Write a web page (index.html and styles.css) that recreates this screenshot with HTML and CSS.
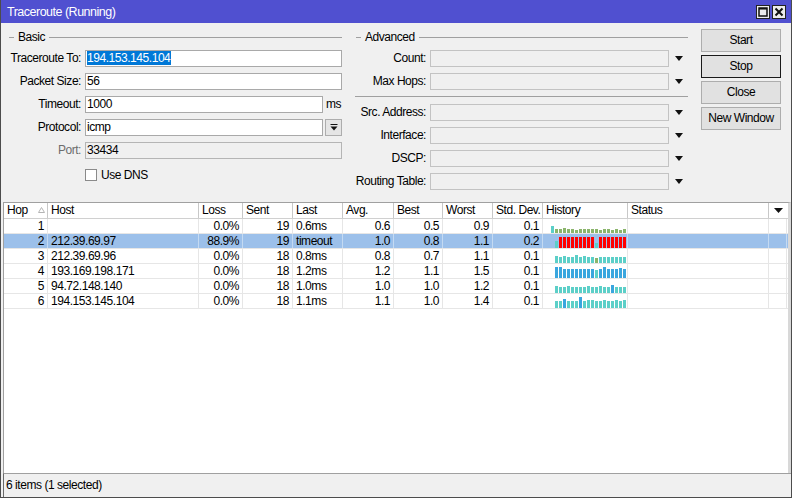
FILE: index.html
```html
<!DOCTYPE html>
<html>
<head>
<meta charset="utf-8">
<link rel="stylesheet" href="styles.css">
</head>
<body>
<div class="window">
  <div class="titlebar">
    <span class="title">Traceroute (Running)</span>
    <div class="tb-buttons">
      <span class="tb-btn"><svg width="10" height="10" viewBox="0 0 10 10"><rect x="1" y="1" width="8" height="8" fill="none" stroke="#111" stroke-width="1.5"/><line x1="1" y1="1.8" x2="9" y2="1.8" stroke="#111" stroke-width="1.5"/></svg></span>
      <span class="tb-btn"><svg width="10" height="10" viewBox="0 0 10 10"><path d="M1.5 1.5 L8.5 8.5 M8.5 1.5 L1.5 8.5" stroke="#111" stroke-width="2"/></svg></span>
    </div>
  </div>

  <div class="top">
    <section class="group basic">
      <div class="legend"><span>Basic</span></div>
      <div class="form">
        <div class="lbl">Traceroute To:</div>
        <div class="box"><span class="sel">194.153.145.104</span></div>
        <div class="lbl">Packet Size:</div>
        <div class="box">56</div>
        <div class="lbl">Timeout:</div>
        <div class="field"><div class="box grow">1000</div><span class="unit">ms</span></div>
        <div class="lbl">Protocol:</div>
        <div class="field"><div class="box grow">icmp</div><span class="dd-btn"><svg width="8" height="7" viewBox="0 0 8 7"><rect x="0.5" y="0" width="7" height="1" fill="#111"/><path d="M0.5 2.5 H7.5 L4 6.5 Z" fill="#111"/></svg></span></div>
        <div class="lbl dis">Port:</div>
        <div class="box disabled">33434</div>
        <div class="lbl"></div>
        <div class="check"><span class="cb"></span><span>Use DNS</span></div>
      </div>
    </section>

    <section class="group advanced">
      <div class="legend"><span>Advanced</span></div>
      <div class="form adv">
        <div class="lbl">Count:</div>
        <div class="field"><div class="box grow empty"></div><span class="arrow"></span></div>
        <div class="lbl">Max Hops:</div>
        <div class="field"><div class="box grow empty"></div><span class="arrow"></span></div>
        <div class="sep"></div>
        <div class="lbl">Src. Address:</div>
        <div class="field"><div class="box grow empty"></div><span class="arrow"></span></div>
        <div class="lbl">Interface:</div>
        <div class="field"><div class="box grow empty"></div><span class="arrow"></span></div>
        <div class="lbl">DSCP:</div>
        <div class="field"><div class="box grow empty"></div><span class="arrow"></span></div>
        <div class="lbl">Routing Table:</div>
        <div class="field"><div class="box grow empty"></div><span class="arrow"></span></div>
      </div>
    </section>

    <div class="buttons">
      <div class="btn">Start</div>
      <div class="btn default">Stop</div>
      <div class="btn">Close</div>
      <div class="btn">New Window</div>
    </div>
  </div>

  <div class="list">
    <div class="row head">
      <div class="c">Hop<svg class="sort" width="7" height="6" viewBox="0 0 7 6"><path d="M3.5 0.5 L6.5 5.5 H0.5 Z" fill="none" stroke="#b4b4b4" stroke-width="1"/></svg></div>
      <div class="c">Host</div>
      <div class="c">Loss</div>
      <div class="c">Sent</div>
      <div class="c">Last</div>
      <div class="c">Avg.</div>
      <div class="c">Best</div>
      <div class="c">Worst</div>
      <div class="c">Std. Dev.</div>
      <div class="c">History</div>
      <div class="c">Status</div>
      <div class="c menu"><svg width="9" height="5" viewBox="0 0 9 5"><path d="M0 0 H9 L4.5 5 Z" fill="#111"/></svg></div>
    </div>

    <div class="row">
      <div class="c r">1</div><div class="c"></div><div class="c r">0.0%</div><div class="c r">19</div><div class="c">0.6ms</div><div class="c r">0.6</div><div class="c r">0.5</div><div class="c r">0.9</div><div class="c r">0.1</div>
      <div class="c hist"><i class="t" style="height:7px"></i><i class="g" style="height:4px"></i><i class="g" style="height:4px"></i><i class="g" style="height:5px"></i><i class="g" style="height:4px"></i><i class="g" style="height:4px"></i><i class="g" style="height:3px"></i><i class="g" style="height:4px"></i><i class="g" style="height:4px"></i><i class="g" style="height:4px"></i><i class="g" style="height:4px"></i><i class="g" style="height:4px"></i><i class="g" style="height:3px"></i><i class="g" style="height:4px"></i><i class="g" style="height:4px"></i><i class="g" style="height:3px"></i><i class="g" style="height:4px"></i><i class="g" style="height:3px"></i><i class="g" style="height:4px"></i></div>
      <div class="c"></div><div class="c"></div>
    </div>

    <div class="row selected">
      <div class="c r">2</div><div class="c">212.39.69.97</div><div class="c r">88.9%</div><div class="c r">19</div><div class="c">timeout</div><div class="c r">1.0</div><div class="c r">0.8</div><div class="c r">1.1</div><div class="c r">0.2</div>
      <div class="c hist"><i style="height:0"></i><i class="t" style="height:7px"></i><i class="rd" style="height:11px"></i><i class="rd" style="height:11px"></i><i class="rd" style="height:11px"></i><i class="rd" style="height:11px"></i><i class="rd" style="height:11px"></i><i class="rd" style="height:11px"></i><i class="rd" style="height:11px"></i><i class="rd" style="height:11px"></i><i class="rd" style="height:11px"></i><i class="t" style="height:5px"></i><i class="rd" style="height:11px"></i><i class="rd" style="height:11px"></i><i class="rd" style="height:11px"></i><i class="rd" style="height:11px"></i><i class="rd" style="height:11px"></i><i class="rd" style="height:11px"></i><i class="rd" style="height:11px"></i></div>
      <div class="c"></div><div class="c"></div>
    </div>

    <div class="row">
      <div class="c r">3</div><div class="c">212.39.69.96</div><div class="c r">0.0%</div><div class="c r">18</div><div class="c">0.8ms</div><div class="c r">0.8</div><div class="c r">0.7</div><div class="c r">1.1</div><div class="c r">0.1</div>
      <div class="c hist"><i style="height:0"></i><i class="t" style="height:7px"></i><i class="t" style="height:6px"></i><i class="t" style="height:7px"></i><i class="t" style="height:6px"></i><i class="t" style="height:6px"></i><i class="t" style="height:8px"></i><i class="t" style="height:6px"></i><i class="t" style="height:7px"></i><i class="t" style="height:6px"></i><i class="t" style="height:6px"></i><i class="g" style="height:5px"></i><i class="t" style="height:6px"></i><i class="t" style="height:6px"></i><i class="t" style="height:6px"></i><i class="t" style="height:6px"></i><i class="t" style="height:6px"></i><i class="t" style="height:6px"></i><i class="t" style="height:6px"></i></div>
      <div class="c"></div><div class="c"></div>
    </div>

    <div class="row">
      <div class="c r">4</div><div class="c">193.169.198.171</div><div class="c r">0.0%</div><div class="c r">18</div><div class="c">1.2ms</div><div class="c r">1.2</div><div class="c r">1.1</div><div class="c r">1.5</div><div class="c r">0.1</div>
      <div class="c hist"><i style="height:0"></i><i class="b" style="height:11px"></i><i class="b" style="height:11px"></i><i class="b" style="height:9px"></i><i class="b" style="height:9px"></i><i class="b" style="height:9px"></i><i class="b" style="height:9px"></i><i class="b" style="height:9px"></i><i class="b" style="height:9px"></i><i class="b" style="height:9px"></i><i class="b" style="height:9px"></i><i class="t" style="height:8px"></i><i class="b" style="height:9px"></i><i class="b" style="height:11px"></i><i class="b" style="height:9px"></i><i class="b" style="height:9px"></i><i class="b" style="height:9px"></i><i class="b" style="height:10px"></i><i class="b" style="height:9px"></i></div>
      <div class="c"></div><div class="c"></div>
    </div>

    <div class="row">
      <div class="c r">5</div><div class="c">94.72.148.140</div><div class="c r">0.0%</div><div class="c r">18</div><div class="c">1.0ms</div><div class="c r">1.0</div><div class="c r">1.0</div><div class="c r">1.2</div><div class="c r">0.1</div>
      <div class="c hist"><i style="height:0"></i><i class="t" style="height:7px"></i><i class="t" style="height:6px"></i><i class="t" style="height:6px"></i><i class="t" style="height:7px"></i><i class="t" style="height:6px"></i><i class="t" style="height:6px"></i><i class="t" style="height:6px"></i><i class="t" style="height:6px"></i><i class="t" style="height:7px"></i><i class="t" style="height:6px"></i><i class="t" style="height:6px"></i><i class="t" style="height:7px"></i><i class="t" style="height:6px"></i><i class="t" style="height:6px"></i><i class="b" style="height:8px"></i><i class="t" style="height:6px"></i><i class="t" style="height:6px"></i><i class="t" style="height:6px"></i></div>
      <div class="c"></div><div class="c"></div>
    </div>

    <div class="row">
      <div class="c r">6</div><div class="c">194.153.145.104</div><div class="c r">0.0%</div><div class="c r">18</div><div class="c">1.1ms</div><div class="c r">1.1</div><div class="c r">1.0</div><div class="c r">1.4</div><div class="c r">0.1</div>
      <div class="c hist"><i style="height:0"></i><i class="t" style="height:7px"></i><i class="t" style="height:7px"></i><i class="b" style="height:9px"></i><i class="t" style="height:7px"></i><i class="t" style="height:7px"></i><i class="t" style="height:7px"></i><i class="b" style="height:11px"></i><i class="t" style="height:7px"></i><i class="t" style="height:8px"></i><i class="t" style="height:8px"></i><i class="t" style="height:7px"></i><i class="t" style="height:7px"></i><i class="t" style="height:8px"></i><i class="t" style="height:7px"></i><i class="t" style="height:7px"></i><i class="t" style="height:8px"></i><i class="t" style="height:7px"></i><i class="t" style="height:8px"></i></div>
      <div class="c"></div><div class="c"></div>
    </div>
  </div>

  <div class="status">6 items (1 selected)</div>
</div>
</body>
</html>
```

FILE: styles.css
```css
* { box-sizing: border-box; }
html, body { margin: 0; padding: 0; }
body {
  font-family: "Liberation Sans", Arial, sans-serif;
  font-size: 12px;
  letter-spacing: -0.45px;
  color: #000;
  background: #f0f0f0;
}
.window {
  width: 792px;
  height: 498px;
  border: 1px solid #4c4c4c;
  border-top: none;
  background: #f0f0f0;
  display: flex;
  flex-direction: column;
}
.titlebar {
  height: 23px;
  background: #5050d0;
  color: #fff;
  display: flex;
  align-items: center;
  justify-content: space-between;
  padding: 0 5px 0 6px;
}
.title { letter-spacing: -0.5px; font-size: 12.5px; }
.tb-buttons { display: flex; gap: 2px; }
.tb-btn {
  width: 14px;
  height: 14px;
  background: #ececec;
  border: 1px solid #222;
  display: flex;
  align-items: center;
  justify-content: center;
}
.top {
  display: flex;
  gap: 13px;
  padding: 7px 0 0 7px;
  height: 179px;
}
.group.basic { width: 334px; }
.group.advanced { width: 333px; }
.legend {
  display: flex;
  align-items: center;
  height: 14px;
  margin-bottom: 6px;
}
.legend::before {
  content: "";
  width: 5px;
  border-top: 1px solid #a0a0a0;
  margin: 0 4px 0 1px;
}
.legend::after {
  content: "";
  flex: 1;
  border-top: 1px solid #a0a0a0;
  margin-left: 4px;
}
.form {
  display: grid;
  grid-template-columns: 73px 1fr;
  column-gap: 4px;
  row-gap: 6px;
  grid-auto-rows: 17px;
}
.form.adv {
  grid-template-columns: 71px 1fr;
  grid-auto-rows: auto;
}
.form.adv > .lbl, .form.adv > .field { height: 17px; }
.sep {
  grid-column: 1 / span 2;
  height: 2px;
  border-top: 1px solid #a0a0a0;
}
.lbl {
  text-align: right;
  line-height: 17px;
  white-space: nowrap;
}
.lbl.dis { color: #6d6d6d; }
.box {
  height: 17px;
  border: 1px solid #a9a9a9;
  background: #fff;
  padding: 0 1px;
  line-height: 15px;
  white-space: nowrap;
  overflow: hidden;
}
.box.disabled { background: #f0f0f0; border-color: #b5b5b5; }
.box.empty { background: #f0f0f0; border-color: #c3c3c3; }
.sel { background: #0078d7; color: #fff; display: inline-block; line-height: 14px; padding-right: 1px; }
.field { display: flex; align-items: center; }
.grow { flex: 1; }
.unit { width: 19px; padding-left: 3px; line-height: 17px; }
.dd-btn {
  width: 17px;
  height: 17px;
  margin-left: 2px;
  border: 1px solid #adadad;
  background: #e5e5e5;
  display: flex;
  align-items: center;
  justify-content: center;
}
.arrow {
  width: 19px;
  height: 17px;
  position: relative;
}
.arrow::after {
  content: "";
  position: absolute;
  left: 6px;
  top: 6px;
  border-left: 4.5px solid transparent;
  border-right: 4.5px solid transparent;
  border-top: 5px solid #111;
}
.check { display: flex; align-items: center; gap: 4px; padding-top: 2px; }
.cb {
  width: 12px;
  height: 12px;
  background: #fff;
  border: 1px solid #8a8a8a;
}
.buttons {
  width: 80px;
  display: flex;
  flex-direction: column;
  gap: 3px;
  margin-top: -1px;
}
.btn {
  height: 23px;
  background: #e1e1e1;
  border: 1px solid #adadad;
  text-align: center;
  line-height: 21px;
}
.btn.default { border-color: #1a1a1a; }

.list {
  flex: 1;
  margin: 0 0 0 2px;
  border-left: 1px solid #a0a0a0;
  border-top: 1px solid #a0a0a0;
  border-right: 3px solid #d8d8d8;
  background: #fff;
}
.row {
  display: grid;
  grid-template-columns: 44px 151px 44px 50px 50px 51px 49px 50px 50px 85px 141px 18px;
  height: 15px;
  border-bottom: 1px solid #e6e6e6;
}
.row.head {
  height: 16px;
  background: #fff;
  border-bottom: 1px solid #d0d0d0;
}
.c {
  border-right: 1px solid #e6e6e6;
  padding: 0 3px;
  line-height: 14px;
  white-space: nowrap;
  overflow: hidden;
}
.head .c { border-right-color: #c8c8c8; line-height: 15px; position: relative; }
.c.r { text-align: right; }
.sort { position: absolute; left: 34px; top: 4px; }
.c.menu { display: flex; align-items: center; justify-content: center; padding: 0; border-right: none; }
.row.selected { background: #9cc0ea; }
.row.selected .c { border-right-color: #c4daf2; }
.hist {
  display: flex;
  align-items: flex-end;
  gap: 1px;
  padding: 0 0 0 8px;
}
.hist i { display: block; width: 3px; flex: none; }
.hist i.g { background: #8bb56c; }
.hist i.t { background: #5ccfc8; }
.hist i.b { background: #3aa6de; }
.hist i.rd { background: #ff0000; }

.status {
  height: 24px;
  margin-left: 2px;
  border-top: 1px solid #a0a0a0;
  border-left: 1px solid #6a6a6a;
  padding-left: 2px;
  line-height: 22px;
}
```
